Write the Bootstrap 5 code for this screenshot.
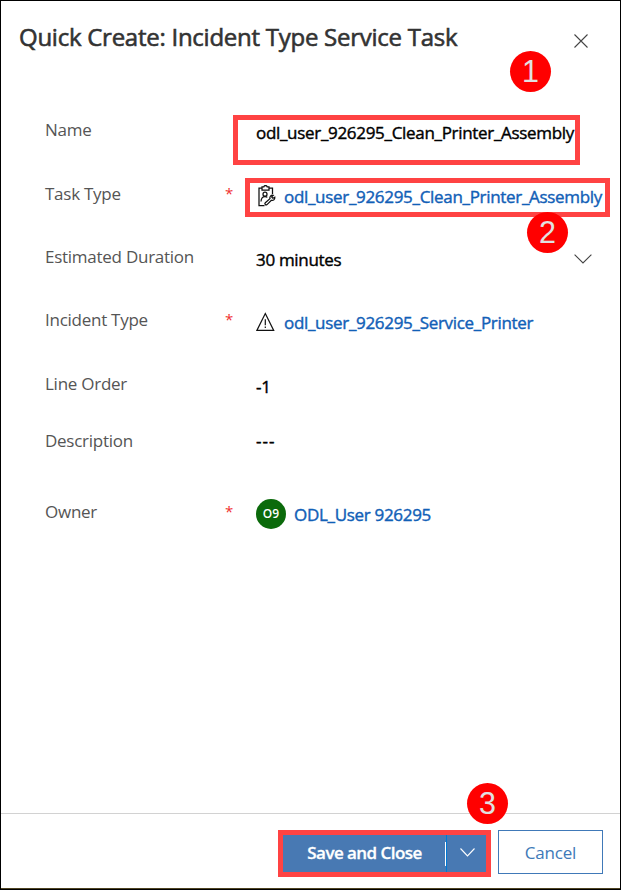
<!DOCTYPE html>
<html lang="en">
<head>
<meta charset="utf-8">
<meta name="viewport" content="width=device-width, initial-scale=1">
<title>Quick Create: Incident Type Service Task</title>
<link href="https://cdn.jsdelivr.net/npm/bootstrap@5.3.0/dist/css/bootstrap.min.css" rel="stylesheet">
<style>
body{font-family:"Open Sans","Noto Sans",sans-serif;overflow:hidden}
.panel{width:621px;height:890px;border:1px solid #000;background:#fff}
.panel-head{height:117px;padding:20px 32px 0 18px}
.panel-title{font-size:24px;line-height:32px;font-weight:400;letter-spacing:-.26px;color:#333;white-space:nowrap;-webkit-text-stroke:.6px #333}
.close-x{width:14px;height:14px;margin-top:13px}
.field{height:63px;padding-left:44px;line-height:24px}
.field.tall{height:64px}
.field.short{height:57px}
.field.wide{height:71px}
.f-label{width:180px;font-size:17px;letter-spacing:-.26px;color:#555;white-space:nowrap}
.f-req{width:31px;font-size:15px;color:#f03030;line-height:23px}
.f-value{padding-top:3px;font-size:17px;letter-spacing:-.31px;color:#000;white-space:nowrap;-webkit-text-stroke:.4px currentColor}
.f-value a{color:#1160b7;text-decoration:none}
.f-value.dashes{padding-top:0;letter-spacing:1px}
.ico{width:20px;height:22px;margin-right:8px}
.chev{width:18px;height:10px;margin:9px 28px 0 0}
.avatar{width:30px;height:30px;margin:-4px 8px 0 0;background:#0b6a0b;color:#fff;font-size:12px;font-weight:600;letter-spacing:0;-webkit-text-stroke:0}
.panel-foot{height:76px;flex:none;border-top:1px solid #d2d2d2;border-bottom:1px solid #4e4321;padding:16px 17px 0 0}
.save-group{width:213px;height:47px;border:5px solid #ff4343;background:#4879b3;margin-right:7px}
.btn-flat{border:0;border-radius:0;padding:0;font-size:17px;line-height:24px;letter-spacing:-.2px}
.save{width:163px;color:#fff;font-weight:600;letter-spacing:-.55px;-webkit-text-stroke:.3px #fff;padding-bottom:2px}
.save-menu{width:40px;border-left:1px solid #0078d4}
.save-menu svg{margin:-3px 0 0 2px}
.sep{width:1px;height:24px;background:#fff;margin-left:-1px}
.cancel{width:105px;height:44px;border:1px solid #4079b8;color:#4079b8;padding-top:2px}
.mark-box{position:absolute;border:5px solid #ff4343}
.m1{left:232px;top:114px;width:347px;height:50px}
.m2{left:244px;top:177px;width:365px;height:39px}
.step{position:absolute;width:41px;height:41px;background:#f00;color:#e1e1e1;font:30.5px/41px "Liberation Sans",Arial,sans-serif;text-align:center}
.s1{left:509px;top:50px}
.s2{left:526px;top:211px}
.s3{left:466px;top:782px}
</style>
<script src="https://cdn.jsdelivr.net/npm/bootstrap@5.3.0/dist/js/bootstrap.bundle.min.js"></script>
</head>
<body>
<main class="panel position-relative d-flex flex-column">
  <header class="panel-head d-flex justify-content-between align-items-start">
    <h1 class="panel-title m-0">Quick Create: Incident Type Service Task</h1>
    <svg class="close-x" viewBox="0 0 14 14" fill="none" stroke="#444" stroke-width="1.1"><path d="M.5.5l13 13M13.5.5l-13 13"/></svg>
  </header>
  <section class="flex-grow-1">
    <div class="field tall d-flex"><div class="f-label">Name</div><div class="f-req"></div><div class="f-value">odl_user_926295_Clean_Printer_Assembly</div></div>
    <div class="field d-flex"><div class="f-label">Task Type</div><div class="f-req">*</div>
      <div class="f-value d-flex">
        <svg class="ico" viewBox="0 0 20 22" fill="none" stroke="#111" stroke-width="1.25"><path d="M6 3.200H3V20.500h5.500M13 3.200h3.500V9M6 1.900h1.800q.2-1.400 1.700-1.400t1.700 1.400H13v3.200H6zM5 16.500c.2-4 1.500-5 4-5 1.100 0 1.800.3 2.300.9"/><circle cx="9" cy="9.200" r="2"/><path d="M9.300 17.800l4.700-4.200c-.6-2 .8-3.700 3.200-3.300l-1.500 1.600 1.200 1.400 1.900-1c.2 2.200-1.500 3.600-3.400 3L11 19.600c-1.300 1-2.800-.7-1.700-1.800z"/></svg>
        <a href="#">odl_user_926295_Clean_Printer_Assembly</a></div></div>
    <div class="field d-flex"><div class="f-label">Estimated Duration</div><div class="f-req"></div><div class="f-value">30 minutes</div>
      <svg class="chev ms-auto" viewBox="0 0 18 10" fill="none" stroke="#444" stroke-width="1.1"><path d="M.6.6L9 9 17.400.6"/></svg></div>
    <div class="field tall d-flex"><div class="f-label">Incident Type</div><div class="f-req">*</div>
      <div class="f-value d-flex">
        <svg class="ico" viewBox="0 0 20 22" fill="none" stroke="#111" stroke-width="1.2"><path d="M9.300 2.500L17.700 19.400H.9zM9.300 8.200v6M9.300 15.600v1.500"/></svg>
        <a href="#">odl_user_926295_Service_Printer</a></div></div>
    <div class="field short d-flex"><div class="f-label">Line Order</div><div class="f-req"></div><div class="f-value">-1</div></div>
    <div class="field wide d-flex"><div class="f-label">Description</div><div class="f-req"></div><div class="f-value dashes">---</div></div>
    <div class="field d-flex"><div class="f-label">Owner</div><div class="f-req">*</div>
      <div class="f-value d-flex"><span class="avatar rounded-circle d-flex align-items-center justify-content-center">O9</span><a href="#">ODL_User 926295</a></div></div>
  </section>
  <footer class="panel-foot d-flex justify-content-end align-items-start">
    <div class="save-group d-flex align-items-center">
      <button class="btn btn-flat save" type="button">Save and Close</button><span class="sep"></span>
      <button class="btn btn-flat save-menu h-100 d-flex align-items-center justify-content-center" type="button" aria-label="More save options"><svg width="15" height="9" viewBox="0 0 15 9" fill="none" stroke="#fff" stroke-width="1.1"><path d="M.5.5l7 7.500 7-7.500"/></svg></button>
    </div>
    <button class="btn btn-flat cancel" type="button">Cancel</button>
  </footer>
  <div class="mark-box m1"></div>
  <div class="mark-box m2"></div>
  <div class="step s1 rounded-circle">1</div>
  <div class="step s2 rounded-circle">2</div>
  <div class="step s3 rounded-circle">3</div>
</main>
</body>
</html>
